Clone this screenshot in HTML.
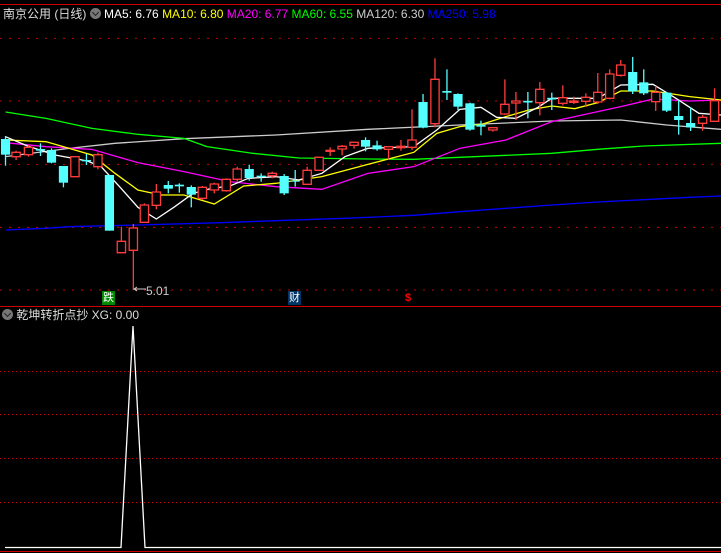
<!DOCTYPE html>
<html><head><meta charset="utf-8"><style>
html,body{margin:0;padding:0;background:#000;width:721px;height:553px;overflow:hidden;position:relative;font-family:"Liberation Sans","Noto Sans CJK SC",sans-serif}
.t{position:absolute;font-size:12px;white-space:nowrap;line-height:14px}
.ic{display:inline-block;width:11px;height:11px;border-radius:50%;background:#777;vertical-align:-1px;position:relative}
.ic:after{content:"";position:absolute;left:3px;top:2px;width:4px;height:4px;border-right:1.5px solid #222;border-bottom:1.5px solid #222;transform:rotate(45deg)}
</style></head><body>
<div style="position:absolute;left:0;top:4px;width:721px;height:1px;background:#c00"></div>
<div class="t" style="left:3px;top:7px;color:#ddd">南京公用 (日线) <span class="ic"></span> <span style="color:#fff">MA5: 6.76</span> <span style="color:#ff0">MA10: 6.80</span> <span style="color:#f0f">MA20: 6.77</span> <span style="color:#0f0">MA60: 6.55</span> <span style="color:#ccc">MA120: 6.30</span> <span style="color:#0000ff">MA250: 5.98</span></div>
<svg id="m" style="position:absolute;left:0;top:30px" width="721" height="270" viewBox="0 0 1568 810" preserveAspectRatio="none"></svg>
<div class="t" style="left:102px;top:291px;width:13px;height:14px;background:#080;color:#fff;font-size:11px;text-align:center">跌</div>
<div class="t" style="left:288px;top:291px;width:13px;height:14px;background:#036;color:#fff;font-size:11px;text-align:center">财</div>
<div class="t" style="left:405px;top:291px;color:#f00;font-size:11px;font-weight:bold">$</div>
<div class="t" style="left:146px;top:284px;color:#ccc">5.01</div>
<div style="position:absolute;left:0;top:306px;width:721px;height:1px;background:#c00"></div>
<div class="t" style="left:2px;top:308px;color:#ddd"><span class="ic"></span> 乾坤转折点抄 XG: 0.00</div>
<svg style="position:absolute;left:0;top:0" width="721" height="553">
<g stroke="#c00" stroke-dasharray="1 3" stroke-width="1">
<line x1="0" y1="371.5" x2="721" y2="371.5"/><line x1="0" y1="414.5" x2="721" y2="414.5"/><line x1="0" y1="458.5" x2="721" y2="458.5"/><line x1="0" y1="502.5" x2="721" y2="502.5"/>
</g>
<polyline points="5,547.5 121,547.5 133,326 145,547.5 721,547.5" fill="none" stroke="#fff" stroke-width="1.3"/>
<line x1="0" y1="551.5" x2="721" y2="551.5" stroke="#c00"/>
<path d="M134 289 L146 289 M134 289 l3 -2 M134 289 l3 2" stroke="#ccc" fill="none"/>
</svg>
<script>
var s=document.getElementById('m'),h='';
[25,213,403,592,780].forEach(function(y){h+='<line x1="0" y1="'+y+'" x2="1568" y2="'+y+'" stroke="#c00" stroke-width="1" stroke-dasharray="2 7" vector-effect="non-scaling-stroke"/>';});
function pl(p,c){h+='<polyline fill="none" stroke="'+c+'" stroke-width="1.3" vector-effect="non-scaling-stroke" points="'+p+'"/>';}
pl("12,600 100,595 150,590 300,585 480,578 600,572 750,565 900,556 1000,545 1100,535 1200,525 1300,516 1400,509 1500,502 1568,498","#0000ff");
pl("12,380 150,355 250,340 400,326 600,315 800,298 1000,285 1200,273 1350,270 1450,285 1568,298","#ccc");
pl("12,246 100,265 200,295 300,313 400,325 450,350 550,370 650,384 800,387 900,388 1000,382 1200,370 1300,358 1400,348 1568,340","#0f0");
pl("12,338 100,350 200,358 300,398 400,425 500,455 600,470 700,478 800,430 900,410 1000,355 1100,330 1200,275 1300,245 1350,230 1420,207 1500,213 1568,210","#f0f");
pl("12,330 100,335 200,375 250,430 300,480 350,495 400,495 466,522 530,468 600,460 700,440 800,403 900,367 950,310 1000,290 1050,282 1100,260 1150,240 1200,228 1250,236 1300,218 1350,183 1420,183 1500,200 1568,210","#ff0");
pl("12,320 60,348 120,375 190,393 220,410 260,470 300,532 340,567 380,530 420,490 460,475 500,468 540,445 600,440 650,450 700,430 750,380 800,355 900,350 950,300 1000,238 1046,232 1080,262 1122,265 1170,232 1200,205 1300,205 1350,165 1420,163 1470,205 1520,250 1568,255","#fff");
var d=[[12,'c',327,374,318,407],[35,'r',367,380,362,390],[62,'r',352,374,345,380],[88,'c',357,362,340,378],[112,'c',360,398,355,400],[138,'c',408,458,408,472],[163,'r',380,440,378,440],[188,'c',390,394,372,405],[213,'r',374,410,368,418],[238,'c',435,602,435,602],[264,'r',634,668,590,668],[290,'r',594,661,582,780],[314,'r',525,577,520,577],[340,'r',486,526,462,538],[366,'c',465,476,453,490],[390,'c',464,469,460,488],[416,'c',471,494,466,532],[440,'r',472,505,468,510],[466,'r',462,480,458,490],[492,'r',448,482,445,485],[516,'r',417,448,410,455],[542,'c',417,444,404,452],[568,'c',437,441,430,455],[592,'r',430,437,425,445],[618,'c',438,490,432,495],[642,'c',452,455,420,470],[668,'r',421,463,410,465],[694,'r',382,421,380,422],[718,'r',361,364,352,378],[744,'r',349,357,345,376],[770,'r',337,346,335,356],[795,'c',330,350,322,364],[820,'c',346,358,332,362],[845,'r',350,358,348,388],[872,'r',349,353,330,362],[896,'r',330,352,238,360],[920,'c',216,293,192,295],[946,'r',148,281,85,292],[972,'c',183,188,118,210],[996,'c',192,230,190,240],[1022,'c',220,299,218,302],[1046,'c',284,290,272,316],[1072,'r',293,300,292,305],[1098,'r',223,252,148,255],[1122,'r',213,219,186,270],[1148,'c',214,216,186,265],[1174,'r',178,218,156,256],[1200,'c',205,207,188,240],[1224,'r',203,220,166,226],[1248,'r',213,217,200,222],[1274,'r',202,214,190,231],[1300,'r',187,216,129,222],[1326,'r',132,205,118,208],[1350,'r',105,136,90,140],[1376,'c',126,184,81,192],[1400,'c',157,190,118,195],[1426,'r',187,215,168,243],[1450,'c',188,242,186,246],[1476,'c',258,270,210,314],[1502,'c',279,292,232,303],[1528,'r',262,280,255,302],[1554,'r',212,274,175,275]];
d.forEach(function(a){var x=a[0],col=a[1]=='c'?'#54ffff':'#ff3b3b',t=a[2],b=a[3];if(b-t<3){t-=1.5;b+=1.5;}
h+='<line x1="'+x+'" y1="'+a[4]+'" x2="'+x+'" y2="'+a[5]+'" stroke="'+col+'" stroke-width="1.3" vector-effect="non-scaling-stroke"/>';
if(a[1]=='c')h+='<rect x="'+(x-10)+'" y="'+t+'" width="20" height="'+(b-t)+'" fill="'+col+'"/>';
else h+='<rect x="'+(x-9)+'" y="'+t+'" width="18" height="'+(b-t)+'" fill="#000" stroke="'+col+'" stroke-width="1.3" vector-effect="non-scaling-stroke"/>';});
s.innerHTML=h;
</script>
</body></html>
